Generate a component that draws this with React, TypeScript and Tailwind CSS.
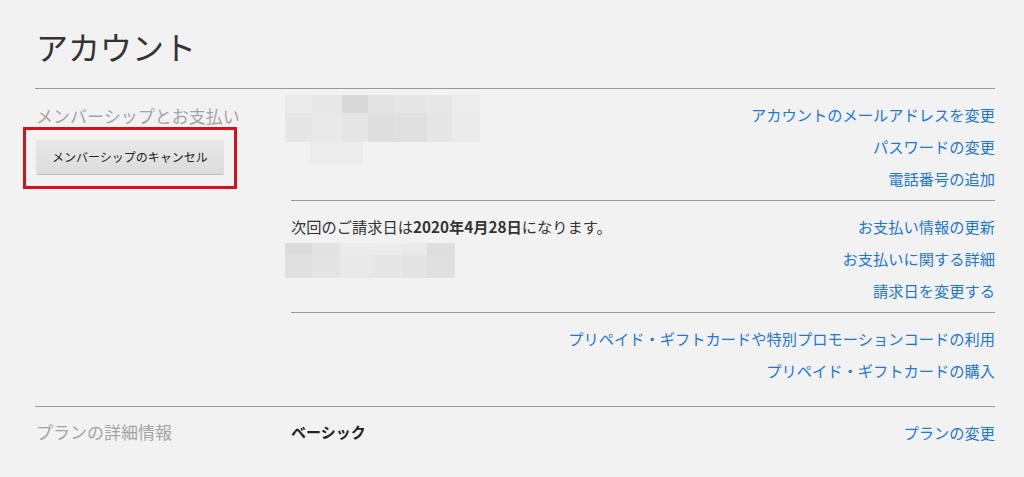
const linkClass = "block h-[32px] leading-[32px] text-[15.25px] text-[#1f77d4] hover:underline";

const mosaicTop = {
	cols: "grid-cols-[27px_30px_26px_27px_32px_25px_28px] grid-rows-[18px_29px]",
	cells: [
		"bg-[#ebebeb]", "bg-[#e7e7e7]", "bg-[#d9d9d9]", "bg-[#e3e3e3]", "bg-[#e6e6e6]", "bg-[#e8e8e8]", "bg-[#ececec]",
		"bg-[#e6e6e6]", "bg-[#e9e9e9]", "bg-[#e5e5e5]", "bg-[#dedede]", "bg-[#e0e0e0]", "bg-[#e6e6e6]", "bg-[#eaeaea]",
	],
};

const mosaicBill = {
	cols: "grid-cols-[27px_28px_32px_31px_24px_28px] grid-rows-[12px_23px]",
	cells: [
		"bg-[#dcdcdc]", "bg-[#e2e2e2]", "bg-[#ebebeb]", "bg-[#ececec]", "bg-[#eaeaea]", "bg-[#dedede]",
		"bg-[#e0e0e0]", "bg-[#e4e4e4]", "bg-[#e9e9e9]", "bg-[#e6e6e6]", "bg-[#e3e3e3]", "bg-[#e0e0e0]",
	],
};

function Mosaic({ cols, cells }: { cols: string; cells: string[] }) {
	return (
		<div className={`grid ${cols}`}>
			{cells.map((c, i) => (
				<div key={i} className={c} />
			))}
		</div>
	);
}

function Links({ items, bottom }: { items: string[]; bottom: string }) {
	return (
		<div className={`flex flex-col items-end pt-[9px] ${bottom}`}>
			{items.map((t) => (
				<a key={t} href="#" className={linkClass}>
					{t}
				</a>
			))}
		</div>
	);
}

export default function App() {
	return (
		<div className="min-h-[477px] bg-[#f2f2f2] pl-[35px] pr-[29px] font-['Noto_Sans_CJK_JP',sans-serif]">
			<h1 className="h-[88px] pt-[26px] pl-[1px] text-[32px] leading-[40px] font-normal text-[#333]">
				アカウント
			</h1>

			<section className="flex border-t border-[#999]">
				<div className="w-[256px] shrink-0 pl-[1px]">
					<h2 className="pt-[15px] text-[17px] leading-[24px] text-[#a3a3a3]">
						メンバーシップとお支払い
					</h2>
					<div className="relative mt-[12px] w-[188px]">
						<button
							type="button"
							className="h-[34px] w-[188px] rounded-[2px] bg-gradient-to-b from-[#e8e8e8] to-[#dcdcdc] text-[12px] text-[#222] shadow-[0_1px_0_rgba(0,0,0,0.2)]"
						>
							メンバーシップのキャンセル
						</button>
						<span className="pointer-events-none absolute -left-[13px] -right-[13px] -top-[13px] -bottom-[15px] border-[3px] border-[#d4111b]" />
					</div>
				</div>

				<div className="flex-1">
					<div className="flex justify-between border-b border-[#999]">
						<div className="-ml-[6px] mt-[6px]">
							<Mosaic {...mosaicTop} />
							<div className="ml-[25px] h-[23px] w-[53px] bg-[#ececec]" />
						</div>
						<Links
							items={["アカウントのメールアドレスを変更", "パスワードの変更", "電話番号の追加"]}
							bottom="pb-[6px]"
						/>
					</div>

					<div className="flex justify-between border-b border-[#999]">
						<div className="pt-[9px]">
							<p className="h-[32px] text-[15.25px] leading-[32px] text-[#333]">
								次回のご請求日は<b className="font-bold">2020年4月28日</b>になります。
							</p>
							<div className="-ml-[6px] mt-[1px]">
								<Mosaic {...mosaicBill} />
							</div>
						</div>
						<Links
							items={["お支払い情報の更新", "お支払いに関する詳細", "請求日を変更する"]}
							bottom="pb-[6px]"
						/>
					</div>

					<div className="flex justify-end">
						<Links
							items={[
								"プリペイド・ギフトカードや特別プロモーションコードの利用",
								"プリペイド・ギフトカードの購入",
							]}
							bottom="pb-[20px]"
						/>
					</div>
				</div>
			</section>

			<section className="flex border-t border-[#999]">
				<h2 className="w-[256px] shrink-0 pl-[1px] pt-[13px] text-[17px] leading-[24px] text-[#a3a3a3]">
					プランの詳細情報
				</h2>
				<div className="flex flex-1 justify-between pt-[9px]">
					<span className="h-[32px] text-[15px] font-bold leading-[32px] text-[#222]">ベーシック</span>
					<a href="#" className={linkClass}>
						プランの変更
					</a>
				</div>
			</section>
		</div>
	);
}
